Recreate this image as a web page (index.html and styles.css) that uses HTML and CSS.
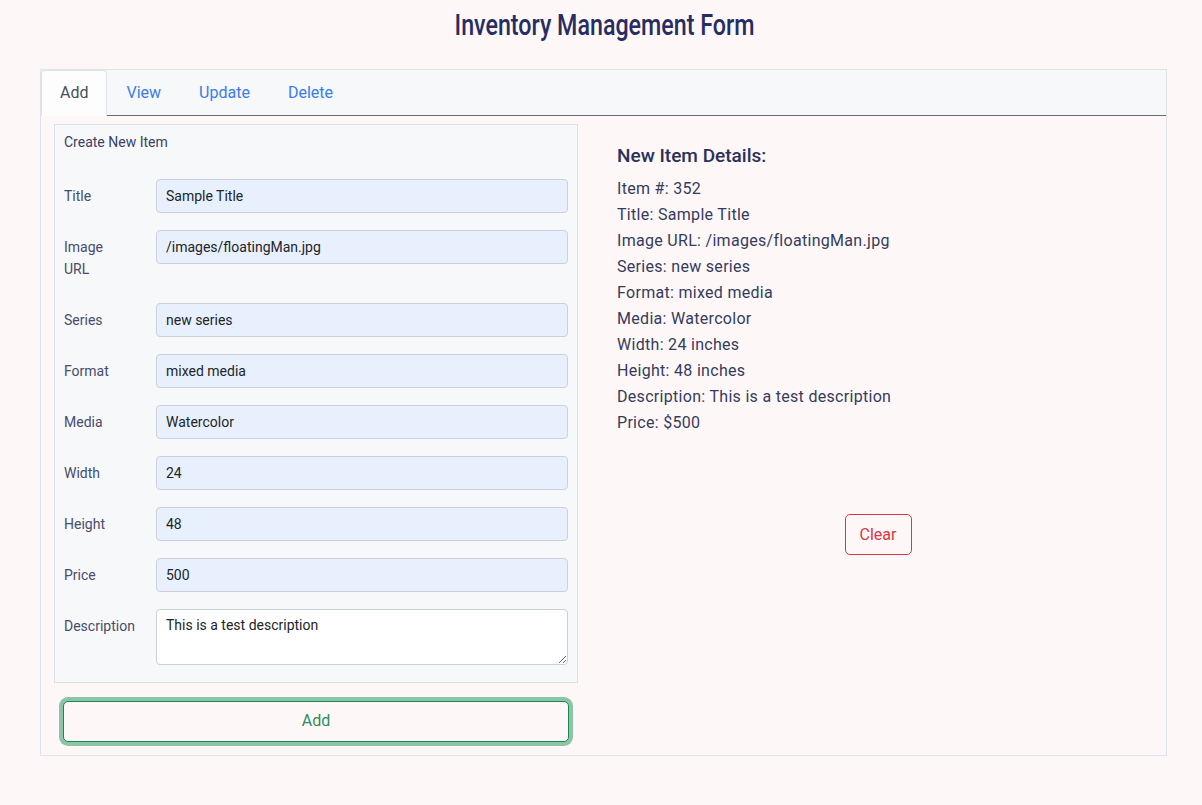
FILE: index.html
```html
<!DOCTYPE html>
<html lang="en">
<head>
<meta charset="utf-8">
<title>Inventory Management Form</title>
<link rel="stylesheet" href="styles.css">
</head>
<body>
<h1 class="page-title"><span class="title-text">Inventory Management Form</span></h1>
<div class="card">
  <ul class="tabs">
    <li class="tab active">Add</li>
    <li class="tab">View</li>
    <li class="tab">Update</li>
    <li class="tab">Delete</li>
  </ul>
  <div class="tab-body">
    <div class="left-col">
      <form class="form-box">
        <div class="form-caption">Create New Item</div>
        <div class="row">
          <label class="lbl">Title</label>
          <input class="field filled" value="Sample Title">
        </div>
        <div class="row">
          <label class="lbl">Image<br>URL</label>
          <input class="field filled" value="/images/floatingMan.jpg">
        </div>
        <div class="row">
          <label class="lbl">Series</label>
          <input class="field filled" value="new series">
        </div>
        <div class="row">
          <label class="lbl">Format</label>
          <input class="field filled" value="mixed media">
        </div>
        <div class="row">
          <label class="lbl">Media</label>
          <input class="field filled" value="Watercolor">
        </div>
        <div class="row">
          <label class="lbl">Width</label>
          <input class="field filled" value="24">
        </div>
        <div class="row">
          <label class="lbl">Height</label>
          <input class="field filled" value="48">
        </div>
        <div class="row">
          <label class="lbl">Price</label>
          <input class="field filled" value="500">
        </div>
        <div class="row">
          <label class="lbl">Description</label>
          <textarea class="field area">This is a test description</textarea>
        </div>
      </form>
      <div class="btn-wrap">
        <button class="btn-add" type="button">Add</button>
      </div>
    </div>
    <div class="right-col">
      <h2 class="details-title">New Item Details:</h2>
      <ul class="details">
        <li>Item #: 352</li>
        <li>Title: Sample Title</li>
        <li>Image URL: /images/floatingMan.jpg</li>
        <li>Series: new series</li>
        <li>Format: mixed media</li>
        <li>Media: Watercolor</li>
        <li>Width: 24 inches</li>
        <li>Height: 48 inches</li>
        <li>Description: This is a test description</li>
        <li>Price: $500</li>
      </ul>
      <div class="clear-wrap">
        <button class="btn-clear" type="button">Clear</button>
      </div>
    </div>
  </div>
</div>
</body>
</html>
```

FILE: styles.css
```css
* { box-sizing: border-box; }
html, body { margin: 0; padding: 0; }
body {
  background: #fdf8f7;
  font-family: Roboto, "Noto Sans", sans-serif;
  color: #2c3160;
  padding: 0 35px 0 40px;
}
.page-title {
  margin: 0;
  padding-top: 7px;
  height: 69px;
  text-align: center;
  font-family: Roboto, "Noto Sans", sans-serif;
  font-weight: 500;
  font-size: 30px;
  line-height: 36px;
  color: #272d63;
}
.title-text {
  display: inline-block;
  transform: scaleX(0.775);
  transform-origin: center;
  margin-left: 2px;
}
.card {
  border: 1px solid #dfe2e8;
  width: 1127px;
}
.tabs {
  list-style: none;
  margin: 0;
  padding: 0;
  display: flex;
  background: #f6f8fa;
  border-bottom: 1px solid #656b78;
  height: 46px;
}
.tab {
  padding: 0 18px;
  line-height: 43px;
  font-size: 16px;
  color: #3a7cf0;
  border: 1px solid transparent;
  border-bottom: none;
}
.tab.active {
  color: #495057;
  background: #fdfdfd;
  border-color: #dfe2e8;
  border-radius: 4px 4px 0 0;
  margin-bottom: -1px;
  height: 46px;
}
.tab-body {
  display: flex;
  gap: 12px;
  padding: 8px 0 13px 13px;
}
.left-col { width: 524px; }
.form-box {
  background: #f7f8fa;
  border: 1px solid #dcdfe5;
  padding: 9px 9px 17px 9px;
  margin: 0;
}
.form-caption {
  font-size: 14px;
  color: #3b4163;
  line-height: 16px;
  margin-bottom: 29px;
}
.row {
  display: grid;
  grid-template-columns: 92px 1fr;
  align-items: start;
  margin-bottom: 17px;
}
.row:last-child { margin-bottom: 0; }
.lbl {
  font-size: 14px;
  color: #474c6b;
  line-height: 22px;
  padding: 6px 0 6px 0;
}
.field {
  font-family: Roboto, "Noto Sans", sans-serif;
  font-size: 14px;
  color: #212529;
  height: 34px;
  border: 1px solid #ccd1d9;
  border-radius: 4px;
  padding: 0 9px;
  width: 412px;
}
.field.filled { background: #e8f0fe; }
.field.area {
  background: #fff;
  height: 56px;
  padding: 7px 9px;
  line-height: 16px;
  resize: vertical;
}
.btn-wrap { padding: 18px 9px 0 9px; }
.btn-add {
  display: block;
  width: 100%;
  height: 41px;
  padding-bottom: 3px;
  background: #fdf8f7;
  border: 1px solid #198754;
  border-radius: 5px;
  box-shadow: 0 0 0 4px #8cc5a6;
  color: #2d8f5b;
  font-family: Roboto, "Noto Sans", sans-serif;
  font-size: 16px;
}
.right-col {
  flex: 1;
  padding: 20px 0 0 27px;
}
.details-title {
  margin: 0 0 9px 0;
  font-size: 19px;
  font-weight: 500;
  color: #2a2f5c;
}
.details {
  list-style: none;
  margin: 0;
  padding: 0;
  font-size: 16px;
  line-height: 26px;
  color: #363b5e;
  letter-spacing: 0.3px;
}
.clear-wrap {
  display: flex;
  justify-content: center;
  margin-top: 78px;
  padding-right: 27px;
}
.btn-clear {
  width: 67px;
  height: 41px;
  background: transparent;
  border: 1px solid #dc3545;
  border-radius: 5px;
  color: #dc3545;
  font-family: Roboto, "Noto Sans", sans-serif;
  font-size: 16px;
}
```
